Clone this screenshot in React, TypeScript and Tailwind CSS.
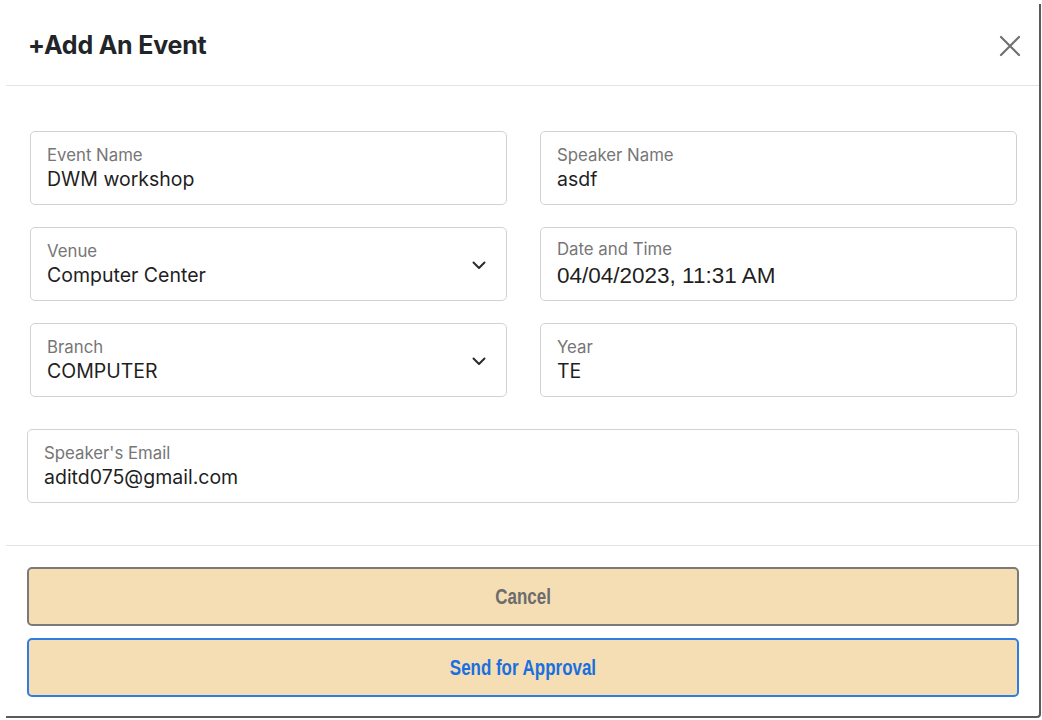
import React from "react";

const fieldFont = { fontFamily: "Inter, 'Liberation Sans', sans-serif" };

function Field({ label, value, select, wide, dateFont }: { label: string; value: string; select?: boolean; wide?: boolean; dateFont?: boolean }) {
  return (
    <div
      className={`${wide ? "w-[992px] pl-[16px]" : "w-[477px] pl-[16px]"} h-[74px] shrink-0 flex items-center justify-between pr-[20px] border border-[#cfd3d8] rounded-[5px] bg-white`}
    >
      <div className="flex flex-col">
        <span className="text-[16.8px] leading-[20px] text-[#767676] font-['Inter','Liberation_Sans',sans-serif] mb-[-1px]">{label}</span>
        <span
          className={`${dateFont ? "text-[22.5px] font-['Liberation_Sans',Arial,sans-serif] mt-[5px]" : "text-[19.5px] font-['Inter','Liberation_Sans',sans-serif] mt-[2px]"} leading-[26px] text-[#1f1f1f]`}
        >
          {value}
        </span>
      </div>
      {select && (
        <svg width="14" height="9" viewBox="0 0 14 9" className="mt-[2px]">
          <path d="M1.5 1.5 L7 7 L12.5 1.5" fill="none" stroke="#2b2b2b" strokeWidth="2" strokeLinecap="round" strokeLinejoin="round" />
        </svg>
      )}
    </div>
  );
}

export default function App() {
  return (
    <div className="w-[1042px] h-[720px] bg-white overflow-hidden pt-[4px] pl-[6px]" style={fieldFont}>
      <div className="w-[1035px] h-[714px] flex flex-col border-r-2 border-b-2 border-[#5a5a5a] rounded-br-[4px] bg-white">
        {/* header */}
        <div className="h-[82px] shrink-0 flex items-center justify-between pl-[22px] pr-[17px] pt-[3px] border-b border-[#e2e4e7]">
          <h1 className="text-[25px] font-bold text-[#212529] tracking-[-0.2px]">+Add An Event</h1>
          <svg width="24" height="24" viewBox="0 0 24 24">
            <path d="M3 3 L21 21 M21 3 L3 21" stroke="#707070" strokeWidth="2.2" strokeLinecap="round" />
          </svg>
        </div>

        {/* body */}
        <div className="h-[460px] shrink-0 flex flex-col pt-[45px] border-b border-[#e2e4e7]">
          <div className="flex flex-col gap-[22px] pl-[24px]">
            <div className="flex gap-[33px]">
              <Field label="Event Name" value="DWM workshop" />
              <Field label="Speaker Name" value="asdf" />
            </div>
            <div className="flex gap-[33px]">
              <Field label="Venue" value="Computer Center" select />
              <Field label="Date and Time" value="04/04/2023, 11:31 AM" dateFont />
            </div>
            <div className="flex gap-[33px]">
              <Field label="Branch" value="COMPUTER" select />
              <Field label="Year" value="TE" />
            </div>
          </div>
          <div className="pl-[21px] mt-[32px]">
            <Field label="Speaker's Email" value="aditd075@gmail.com" wide />
          </div>
        </div>

        {/* footer */}
        <div className="flex flex-col gap-[12px] pt-[21px] pl-[21px] font-['Liberation_Sans',Arial,sans-serif]">
          <button className="w-[992px] h-[59px] bg-[#f5deb3] border-2 border-[#7a7a7a] rounded-[5px] text-[22px] font-bold text-[#6c6c6c]">
            <span className="inline-block scale-x-[0.77]">Cancel</span>
          </button>
          <button className="w-[992px] h-[59px] bg-[#f5deb3] border-2 border-[#2f7de1] rounded-[5px] text-[22px] font-bold text-[#1a6fe0]">
            <span className="inline-block scale-x-[0.77]">Send for Approval</span>
          </button>
        </div>
      </div>
    </div>
  );
}
